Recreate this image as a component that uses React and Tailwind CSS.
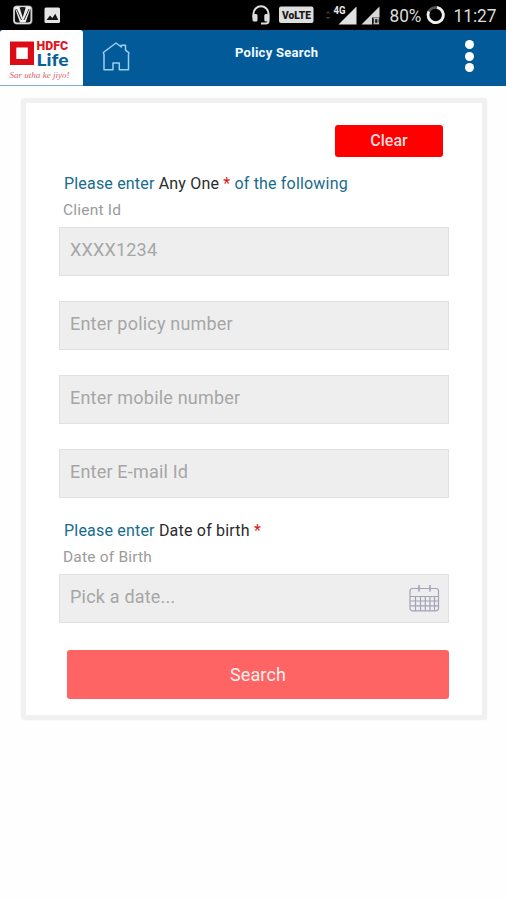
function StatusBar() {
  return (
    <div className="flex h-[30px] items-center bg-black text-[#dcdcdc]">
      <svg width="506" height="30" viewBox="0 0 506 30" fontFamily="Roboto, sans-serif">
        <rect x="13" y="5.5" width="19.5" height="19" rx="4" fill="#8d8d8d" />
        <rect x="14.2" y="6.7" width="17" height="16.6" rx="3" fill="#111" stroke="#dcdcdc" strokeWidth="1.4" />
        <path d="M14.5 7H19.5L22.7 17.5L25.8 7H31L25.5 22.5H20Z" fill="#efefef" />
        <path d="M16.5 9L21.5 20M29 9L24 20" stroke="#333" strokeWidth="1" />
        <path d="M20.5 7H24.8L22.7 14Z" fill="#222" />
        <rect x="44.5" y="7.5" width="15.5" height="15.5" rx="1.5" fill="#e6e6e6" />
        <path d="M46.5 20L50 15.5L52.3 18L55.3 13.8L58.3 20Z" fill="#161616" />
        <path d="M253.5 18V13.5a7.5 7.2 0 0 1 15 0V21q0 2.5-3 2.5H261" fill="none" stroke="#dedede" strokeWidth="2" />
        <rect x="252.5" y="14" width="5" height="7.5" rx="1.5" fill="#dedede" />
        <rect x="264.3" y="14" width="5" height="7.5" rx="1.5" fill="#dedede" />
        <rect x="279" y="6.5" width="34.5" height="16.5" rx="2" fill="#dedede" />
        <text x="282" y="18.8" fontSize="10.5" fontWeight="900" fill="#181818" textLength="29" lengthAdjust="spacingAndGlyphs">VoLTE</text>
        <path d="M325.5 13.5L328 11L330.5 13.5ZM325.5 17L328 19.5L330.5 17Z" fill="#373737" />
        <path d="M356.5 6.5V24.5H338.5Z" fill="#e2e2e2" />
        <text x="333.5" y="14" fontSize="10" fontWeight="700" fill="#ececec" stroke="#000" strokeWidth="1.2" paintOrder="stroke" textLength="12" lengthAdjust="spacingAndGlyphs">4G</text>
        <path d="M379.5 6.5V24.5H361.5Z" fill="#d8d8d8" />
        <path d="M372 17.5H380V25H372Z" fill="#191919" />
        <path d="M373.5 18.5H379M373.5 23.5H379M374.5 18.5V23.5M378 18.5V23.5" stroke="#bcbcbc" strokeWidth="1.3" />
        <text x="389.5" y="22" fontSize="18" fill="#dcdcdc" textLength="32" lengthAdjust="spacingAndGlyphs">80%</text>
        <circle cx="435.7" cy="15" r="7.7" fill="none" stroke="#585858" strokeWidth="2.7" />
        <path d="M437 7.4A7.7 7.7 0 1 1 428.8 11.5" fill="none" stroke="#f0f0f0" strokeWidth="2.8" />
        <text x="453.5" y="22" fontSize="18" fill="#dcdcdc" textLength="43" lengthAdjust="spacingAndGlyphs">11:27</text>
      </svg>
    </div>
  );
}

function Logo() {
  return (
    <svg width="83" height="56" viewBox="0 0 83 56" className="shrink-0">
      <path d="M0 3Q0 0 3 0H80Q83 0 83 3V55.5H0Z" fill="#fff" />
      <rect x="10" y="11.5" width="24" height="23.5" fill="#dc0c16" />
      <rect x="16.3" y="17.5" width="11.5" height="11.5" fill="#fff" />
      <text x="36.5" y="19.5" fontFamily="Roboto, sans-serif" fontSize="12" fontWeight="900" fill="#e01822" textLength="31.5" lengthAdjust="spacingAndGlyphs">HDFC</text>
      <text x="36.5" y="35.7" fontFamily="Lato, sans-serif" fontSize="17.5" fontWeight="900" fill="#0b6099" textLength="32" lengthAdjust="spacingAndGlyphs">Life</text>
      <text x="9.5" y="48" fontFamily="Liberation Serif, serif" fontSize="9" fontStyle="italic" fill="#d9626c" textLength="60" lengthAdjust="spacingAndGlyphs">Sar utha ke jiyo!</text>
    </svg>
  );
}

function Header() {
  return (
    <header className="flex h-14 bg-[#025b98]">
      <Logo />
      <svg width="30" height="30" viewBox="0 0 30 30" className="mt-3 ml-[18px]" fill="none" stroke="#9dcdf0" strokeWidth="1.5">
        <path d="M2.3 10.5L15 1L20.3 5V3.3H24.5V8.2L28 10.8L27.5 12.5V27.7H18.3V21H12V27.7H3V12.5Z" strokeLinejoin="round" />
      </svg>
      <h1 className="mt-[14px] ml-[104px] w-[200px] text-[13px] leading-[18px] font-bold tracking-[0.27px] text-[#f2faff]">Policy Search</h1>
      <div className="mt-[10px] ml-[30px] flex flex-col gap-[2.5px]">
        <i className="size-[9px] rounded-full bg-white" />
        <i className="size-[9px] rounded-full bg-white" />
        <i className="size-[9px] rounded-full bg-white" />
      </div>
    </header>
  );
}

function Field({ children, icon }) {
  return (
    <div className="flex h-[49px] w-[390px] items-start justify-between border-[1.5px] border-[#e0e0e0] bg-[#eeeeee] pr-[8px] pl-[10px]">
      <span className="mt-[10px] text-[18px] leading-6 tracking-[0.2px] text-[#a6a6a6]">{children}</span>
      {icon}
    </div>
  );
}

function CalendarIcon() {
  return (
    <svg width="31" height="29" viewBox="0 0 31 29" className="mt-[9px]" fill="none" stroke="#a3a3b8" strokeWidth="1.2">
      <rect x="1" y="4.5" width="28.5" height="22.3" rx="2.5" />
      <path d="M10 1V7.5M21 1V7.5" strokeWidth="1.6" />
      <path d="M1 12.5H29.5M1 17H29.5M1 21.8H29.5M6.5 12.5V27M11.5 12.5V27M16.3 12.5V27M21 12.5V27M25.5 12.5V27" />
    </svg>
  );
}

export default function App() {
  return (
    <div className="h-[900px] w-[506px] overflow-hidden bg-[#fefefe] font-['Roboto',sans-serif]">
      <StatusBar />
      <Header />
      <main className="mt-[12px] ml-[21px] flex h-[622px] w-[466px] flex-col rounded-[3px] border-[5px] border-[#f1f1f1] bg-white pl-[33px] shadow-[0_0_2px_#f4f4f4]">
        <button className="mt-[22px] ml-[276px] h-[32px] w-[108px] rounded-[3px] bg-[#fe0000] text-[16px] leading-[32px] font-medium text-[#ffdcdc]">Clear</button>
        <p className="mt-[17px] ml-[5px] text-[16px] leading-5 tracking-[0.18px] whitespace-nowrap text-[#176b8c]">
          Please enter <span className="text-[#2b2b2b]">Any One</span> <span className="text-[#e01818]">*</span> of the following
        </p>
        <p className="mt-[6px] mb-[7px] ml-1 text-[15.5px] leading-5 tracking-[0.2px] text-[#9b9b9b]">Client Id</p>
        <div className="flex flex-col gap-[25px]">
          <Field>XXXX1234</Field>
          <Field>Enter policy number</Field>
          <Field>Enter mobile number</Field>
          <Field>Enter E-mail Id</Field>
        </div>
        <p className="mt-[23px] ml-[5px] text-[16px] leading-5 tracking-[0.2px] whitespace-nowrap text-[#176b8c]">
          Please enter <span className="text-[#2b2b2b]">Date of birth</span> <span className="text-[#e01818]">*</span>
        </p>
        <p className="mt-[6px] mb-[7px] ml-1 text-[15.5px] leading-5 tracking-[0.2px] text-[#9b9b9b]">Date of Birth</p>
        <Field icon={<CalendarIcon />}>Pick a date...</Field>
        <button className="mt-[27px] ml-[8px] h-[49px] w-[382px] rounded-[3px] bg-[#ff6464] text-[18px] leading-[49px] tracking-[0.15px] text-[#fff0f0]">Search</button>
      </main>
    </div>
  );
}
